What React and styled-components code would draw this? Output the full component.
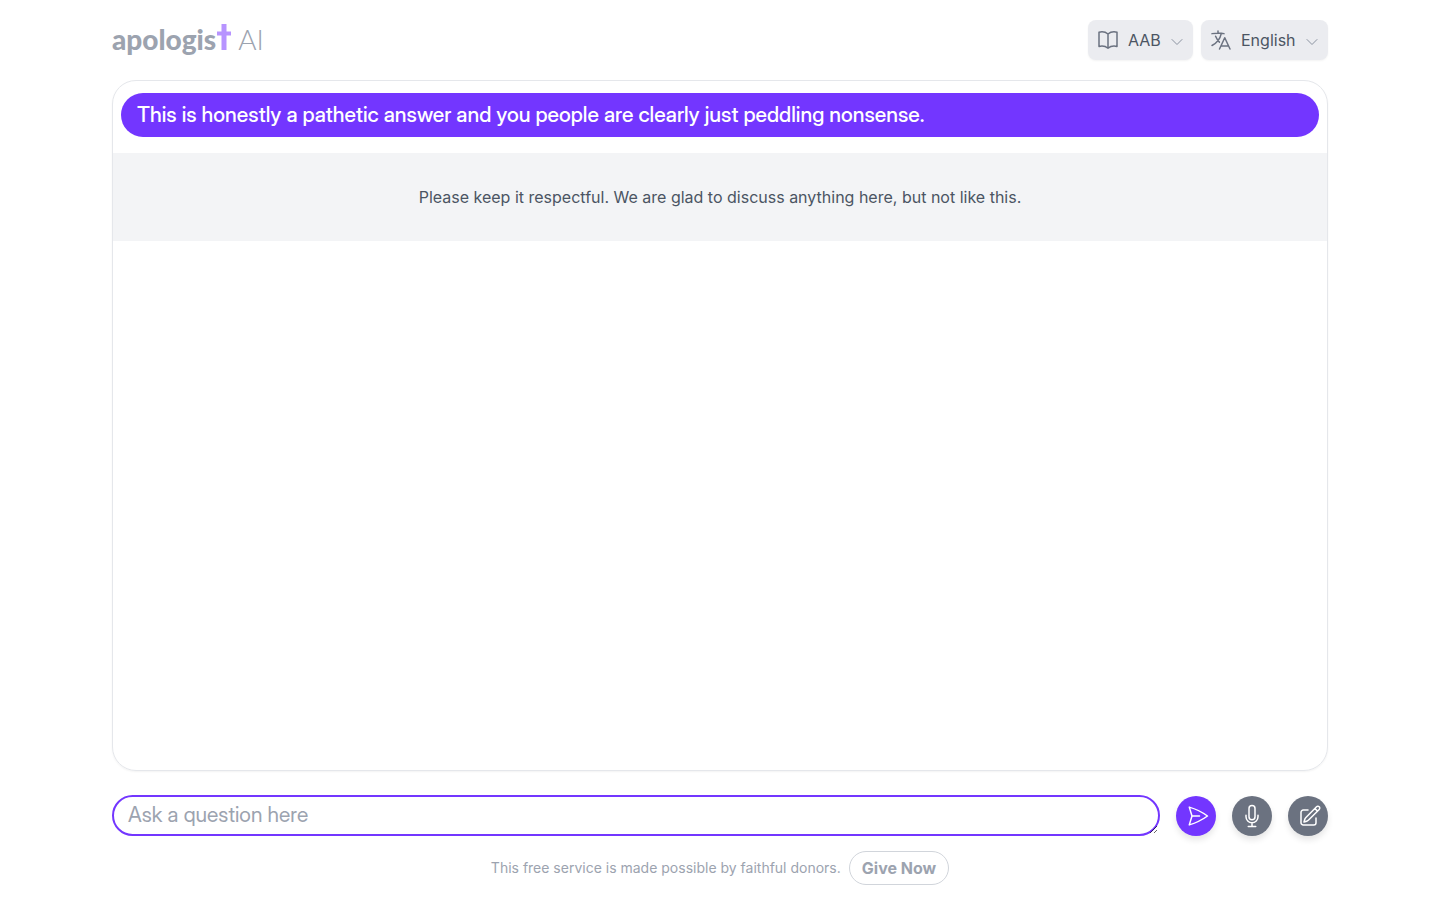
import { useState } from "react";
import styled, { createGlobalStyle } from "styled-components";
import {
	HiOutlineBookOpen,
	HiOutlineChevronDown,
	HiOutlineLanguage,
	HiOutlineMicrophone,
	HiOutlinePaperAirplane,
	HiOutlinePencilSquare,
} from "react-icons/hi2";

const App = () => {
	const [question, setQuestion] = useState("");

	return (
		<>
			<GlobalStyle />
			<Page>
				<Header>
					<Logo />
					<Pickers>
						<Picker label="Bible translation" icon={<HiOutlineBookOpen />} options={["AAB"]} />
						<Picker label="Language" icon={<HiOutlineLanguage />} options={["English"]} />
					</Pickers>
				</Header>

				<Conversation>
					<Bubble>
						This is honestly a pathetic answer and you people are clearly just peddling nonsense.
					</Bubble>
					<Notice>
						Please keep it respectful. We are glad to discuss anything here, but not like this.
					</Notice>
				</Conversation>

				<Composer onSubmit={(e) => e.preventDefault()}>
					<Question
						aria-label="Question"
						rows={1}
						placeholder="Ask a question here"
						value={question}
						onChange={(e) => setQuestion(e.target.value)}
					/>
					<RoundButton type="submit" aria-label="Send" $primary $nudge>
						<HiOutlinePaperAirplane />
					</RoundButton>
					<RoundButton type="button" aria-label="Speak">
						<HiOutlineMicrophone />
					</RoundButton>
					<RoundButton type="button" aria-label="New conversation" $nudge>
						<HiOutlinePencilSquare />
					</RoundButton>
				</Composer>

				<Footer>
					<p>This free service is made possible by faithful donors.</p>
					<GiveButton type="button">Give Now</GiveButton>
				</Footer>
			</Page>
		</>
	);
};

const Logo = () => (
	<Brand href="#" aria-label="apologist AI">
		<strong>apologis</strong>
		<svg width="14" height="26" viewBox="0 0 14 26" aria-hidden="true">
			<path d="M4.500 0h5v7.500h4.500v4H9.500V26h-5V11.500H0v-4h4.500z" fill="#b794ff" />
		</svg>
		<span>AI</span>
	</Brand>
);

const Picker = ({ label, icon, options }) => (
	<PickerBox>
		{icon}
		<select aria-label={label}>
			{options.map((option) => (
				<option key={option}>{option}</option>
			))}
		</select>
		<HiOutlineChevronDown className="chevron" />
	</PickerBox>
);

const GlobalStyle = createGlobalStyle`
	* {
		box-sizing: border-box;
		margin: 0;
	}

	body {
		background: #fff;
		color: #4b5563;
		font-family: Inter, sans-serif;
		font-size: 16px;
		line-height: 24px;
	}

	button, select, textarea {
		font: inherit;
		color: inherit;
	}
`;

const Page = styled.main`
	display: flex;
	flex-direction: column;
	min-height: 100vh;
	padding: 0 112px 15px;
`;

const Header = styled.header`
	display: flex;
	align-items: center;
	justify-content: space-between;
	height: 80px;
`;

const Brand = styled.a`
	display: flex;
	align-items: baseline;
	padding-bottom: 2px;
	color: #9ca3af;
	font-family: Lato, sans-serif;
	font-size: 28px;
	line-height: 32px;
	text-decoration: none;

	strong {
		font-weight: 900;
	}

	svg {
		margin-left: 1px;
	}

	span {
		margin-left: 7px;
		font-weight: 300;
	}
`;

const Pickers = styled.div`
	display: flex;
	gap: 8px;
`;

const PickerBox = styled.label`
	display: flex;
	align-items: center;
	gap: 8px;
	height: 40px;
	padding: 0 8px;
	border-radius: 8px;
	background: #ebecf0;
	box-shadow: 0 1px 2px rgba(0, 0, 0, 0.05);

	select {
		appearance: none;
		padding: 0;
		border: 0;
		background: none;
		outline: none;
	}

	svg {
		width: 24px;
		height: 24px;
		color: #6b7280;
	}

	.chevron {
		width: 16px;
		height: 16px;
		margin-top: 4px;
		color: #8b93a1;
	}
`;

const Conversation = styled.section`
	flex: 1;
	padding-top: 12px;
	overflow: hidden;
	border: 1px solid #e5e7eb;
	border-radius: 24px;
	box-shadow: 0 1px 2px rgba(0, 0, 0, 0.05);
`;

const Bubble = styled.p`
	margin: 0 8px 16px;
	padding: 8px 16px;
	border-radius: 24px;
	background: #7336ff;
	color: #fff;
	font-family: "Inter Display", Inter, sans-serif;
	font-size: 21px;
	font-weight: 500;
	line-height: 28px;
`;

const Notice = styled.p`
	padding: 32px;
	background: #f3f4f6;
	text-align: center;
`;

const Composer = styled.form`
	display: flex;
	align-items: flex-end;
	gap: 16px;
	margin: 24px 0 15px;
`;

const Question = styled.textarea`
	flex: 1;
	height: 41px;
	padding: 4px 14px;
	border: 2px solid #7336ff;
	border-radius: 24px;
	outline: none;
	font-family: "Inter Display", Inter, sans-serif;
	font-size: 21px;
	line-height: 28px;

	&::placeholder {
		color: #9ca3af;
	}
`;

const RoundButton = styled.button`
	display: flex;
	align-items: center;
	justify-content: center;
	width: 40px;
	height: 40px;
	padding: 0 0 0 ${({ $nudge }) => ($nudge ? "4px" : "0")};
	border: 0;
	border-radius: 50%;
	background: ${({ $primary }) => ($primary ? "#7336ff" : "#6b7280")};
	color: #fff;
	box-shadow: 0 4px 6px rgba(0, 0, 0, 0.1);

	svg {
		width: 24px;
		height: 24px;
	}
`;

const Footer = styled.footer`
	display: flex;
	align-items: center;
	justify-content: center;
	gap: 8px;
	color: #9ca3af;
	font-size: 14px;
`;

const GiveButton = styled.button`
	height: 34px;
	padding: 0 12px;
	border: 1px solid #d1d5db;
	border-radius: 17px;
	background: #fff;
	font-size: 16px;
	font-weight: 700;
`;

export default App;
